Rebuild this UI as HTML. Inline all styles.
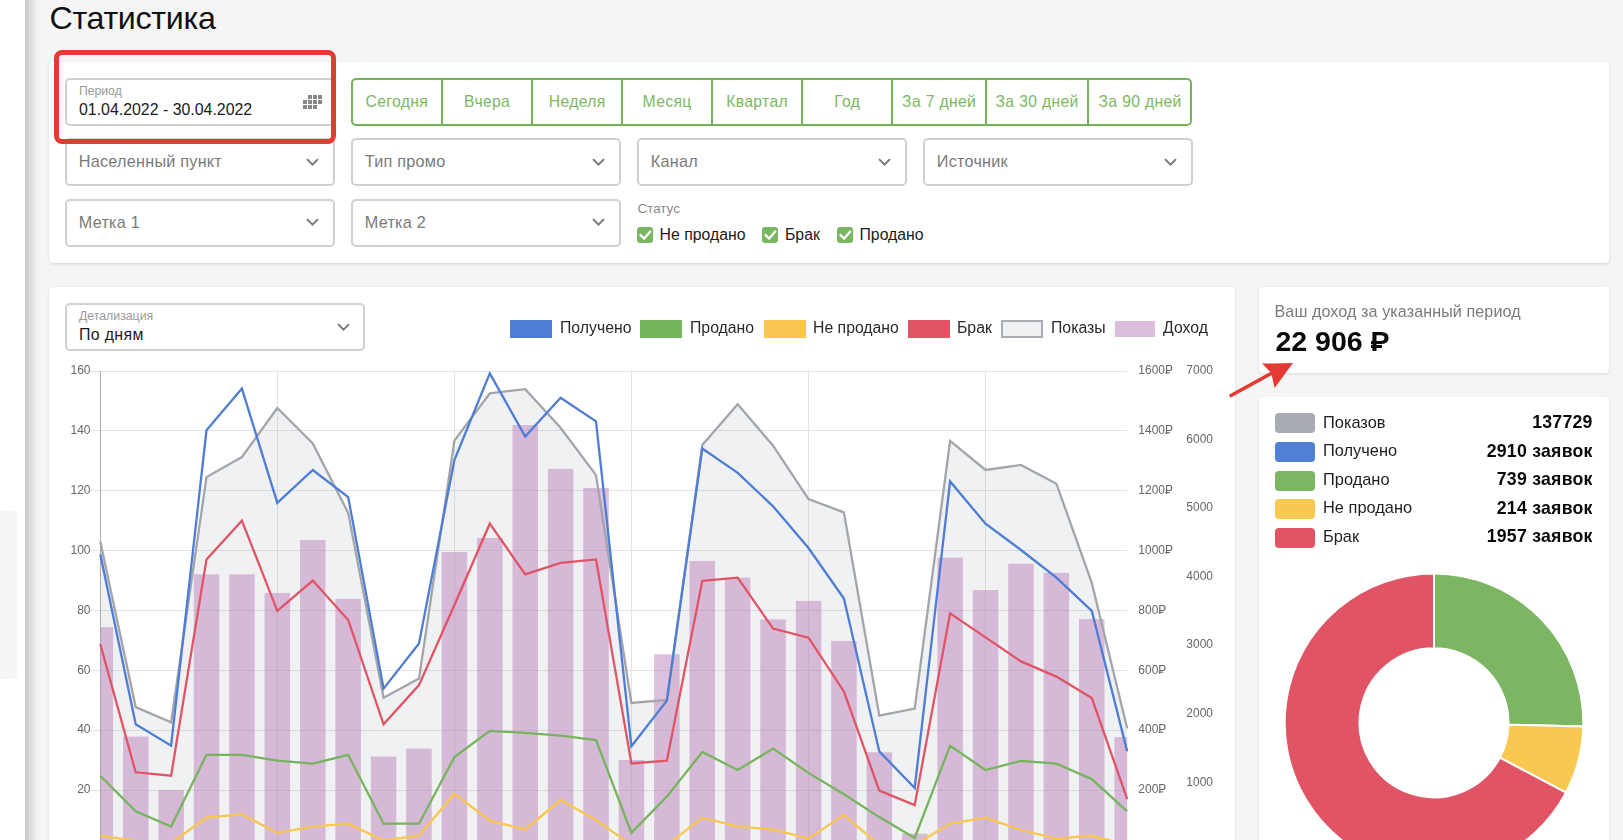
<!DOCTYPE html>
<html><head><meta charset="utf-8"><title>Статистика</title>
<style>
html,body{margin:0;padding:0}
body{width:1623px;height:840px;overflow:hidden;position:relative;background:#f5f5f5;font-family:"Liberation Sans",sans-serif}
.abs,.t,.card,.fld,.ic,.box{position:absolute}
.t{line-height:1;white-space:nowrap}
.card{background:#fff;border-radius:4px;box-shadow:0 1px 3px rgba(0,0,0,0.13)}
.fld{box-sizing:border-box;border:2px solid #d0d0d0;border-radius:5px;background:#fff}
.ax{font-family:"Liberation Sans",sans-serif;font-size:12px;fill:#666}
.rub{}
.rubb{position:relative;display:inline-block}
.rubb:after{content:"";position:absolute;left:0px;width:11px;top:0.625em;height:3px;background:#0a0a0a}
.rubb:before{content:"";position:absolute;left:0px;width:4px;top:0.5em;height:3px;background:#0a0a0a}
</style></head><body>
<div class="abs" style="left:0;top:0;width:25px;height:840px;background:#fff"></div>
<div class="abs" style="left:25px;top:0;width:16px;height:840px;background:linear-gradient(to right,rgba(0,0,0,0.2),rgba(0,0,0,0.15) 3px,rgba(0,0,0,0.08) 7px,rgba(0,0,0,0.035) 10px,rgba(0,0,0,0) 15px)"></div>
<div class="abs" style="left:0;top:511px;width:17px;height:168px;background:#f5f5f5;border-radius:0 4px 4px 0"></div>
<div class="t" style="left:49.5px;top:2.24px;font-size:32.2px;color:#111;font-weight:normal;letter-spacing:-0.3px;">Статистика</div>
<div class="card" style="left:49px;top:62px;width:1560px;height:201px"></div>
<div class="fld" style="left:65px;top:78px;width:270px;height:48px"></div>
<div class="t" style="left:79px;top:84.97px;font-size:12.2px;color:#9a9a9a;font-weight:normal;">Период</div>
<div class="t" style="left:79px;top:102.14px;font-size:15.9px;color:#1a1a1a;font-weight:normal;">01.04.2022 - 30.04.2022</div>
<svg class="ic" style="left:303px;top:95px" width="20" height="15"><rect x="5" y="0" width="4" height="4" fill="#888"/><rect x="10" y="0" width="4" height="4" fill="#888"/><rect x="15" y="0" width="4" height="4" fill="#888"/><rect x="0" y="5" width="4" height="4" fill="#888"/><rect x="5" y="5" width="4" height="4" fill="#888"/><rect x="10" y="5" width="4" height="4" fill="#888"/><rect x="15" y="5" width="4" height="4" fill="#888"/><rect x="0" y="10" width="4" height="4" fill="#888"/><rect x="5" y="10" width="4" height="4" fill="#888"/><rect x="10" y="10" width="4" height="4" fill="#888"/></svg>
<div class="abs" style="left:351px;top:78px;width:837px;height:44px;border:2px solid #74b35a;border-radius:5px"></div>
<div class="t" style="left:196.89999999999998px;width:400px;text-align:center;top:93.81px;font-size:15.7px;color:#7cb862;font-weight:normal;letter-spacing:0.35px;">Сегодня</div>
<div class="abs" style="left:441px;top:78px;width:2px;height:48px;background:#74b35a"></div>
<div class="t" style="left:287.15px;width:400px;text-align:center;top:93.81px;font-size:15.7px;color:#7cb862;font-weight:normal;letter-spacing:0.35px;">Вчера</div>
<div class="abs" style="left:531px;top:78px;width:2px;height:48px;background:#74b35a"></div>
<div class="t" style="left:377.15px;width:400px;text-align:center;top:93.81px;font-size:15.7px;color:#7cb862;font-weight:normal;letter-spacing:0.35px;">Неделя</div>
<div class="abs" style="left:621px;top:78px;width:2px;height:48px;background:#74b35a"></div>
<div class="t" style="left:467.15px;width:400px;text-align:center;top:93.81px;font-size:15.7px;color:#7cb862;font-weight:normal;letter-spacing:0.35px;">Месяц</div>
<div class="abs" style="left:711px;top:78px;width:2px;height:48px;background:#74b35a"></div>
<div class="t" style="left:557.15px;width:400px;text-align:center;top:93.81px;font-size:15.7px;color:#7cb862;font-weight:normal;letter-spacing:0.35px;">Квартал</div>
<div class="abs" style="left:801px;top:78px;width:2px;height:48px;background:#74b35a"></div>
<div class="t" style="left:647.15px;width:400px;text-align:center;top:93.81px;font-size:15.7px;color:#7cb862;font-weight:normal;letter-spacing:0.35px;">Год</div>
<div class="abs" style="left:891px;top:78px;width:2px;height:48px;background:#74b35a"></div>
<div class="t" style="left:739.15px;width:400px;text-align:center;top:93.81px;font-size:15.7px;color:#7cb862;font-weight:normal;letter-spacing:0.35px;">За 7 дней</div>
<div class="abs" style="left:985px;top:78px;width:2px;height:48px;background:#74b35a"></div>
<div class="t" style="left:837.1500000000001px;width:400px;text-align:center;top:93.81px;font-size:15.7px;color:#7cb862;font-weight:normal;letter-spacing:0.35px;">За 30 дней</div>
<div class="abs" style="left:1087px;top:78px;width:2px;height:48px;background:#74b35a"></div>
<div class="t" style="left:940.1500000000001px;width:400px;text-align:center;top:93.81px;font-size:15.7px;color:#7cb862;font-weight:normal;letter-spacing:0.35px;">За 90 дней</div>
<div class="fld" style="left:65px;top:138px;width:270px;height:48px"></div>
<div class="t" style="left:78.8px;top:153.29px;font-size:16.2px;color:#7a7a7a;font-weight:normal;letter-spacing:0.25px;">Населенный пункт</div>
<svg class="ic" style="left:306.3px;top:157.6px" width="13" height="9"><polyline points="1,1.2 6.5,6.7 12,1.2" fill="none" stroke="#767676" stroke-width="1.9"/></svg>
<div class="fld" style="left:351px;top:138px;width:270px;height:48px"></div>
<div class="t" style="left:364.8px;top:153.29px;font-size:16.2px;color:#7a7a7a;font-weight:normal;letter-spacing:0.25px;">Тип промо</div>
<svg class="ic" style="left:592.3px;top:157.6px" width="13" height="9"><polyline points="1,1.2 6.5,6.7 12,1.2" fill="none" stroke="#767676" stroke-width="1.9"/></svg>
<div class="fld" style="left:637px;top:138px;width:270px;height:48px"></div>
<div class="t" style="left:650.8px;top:153.29px;font-size:16.2px;color:#7a7a7a;font-weight:normal;letter-spacing:0.25px;">Канал</div>
<svg class="ic" style="left:878.3px;top:157.6px" width="13" height="9"><polyline points="1,1.2 6.5,6.7 12,1.2" fill="none" stroke="#767676" stroke-width="1.9"/></svg>
<div class="fld" style="left:923px;top:138px;width:270px;height:48px"></div>
<div class="t" style="left:936.8px;top:153.29px;font-size:16.2px;color:#7a7a7a;font-weight:normal;letter-spacing:0.25px;">Источник</div>
<svg class="ic" style="left:1164.3px;top:157.6px" width="13" height="9"><polyline points="1,1.2 6.5,6.7 12,1.2" fill="none" stroke="#767676" stroke-width="1.9"/></svg>
<div class="fld" style="left:65px;top:199px;width:270px;height:48px"></div>
<div class="t" style="left:78.8px;top:213.79px;font-size:16.2px;color:#7a7a7a;font-weight:normal;letter-spacing:0.25px;">Метка 1</div>
<svg class="ic" style="left:306.3px;top:218.3px" width="13" height="9"><polyline points="1,1.2 6.5,6.7 12,1.2" fill="none" stroke="#767676" stroke-width="1.9"/></svg>
<div class="fld" style="left:351px;top:199px;width:270px;height:48px"></div>
<div class="t" style="left:364.8px;top:213.79px;font-size:16.2px;color:#7a7a7a;font-weight:normal;letter-spacing:0.25px;">Метка 2</div>
<svg class="ic" style="left:592.3px;top:218.3px" width="13" height="9"><polyline points="1,1.2 6.5,6.7 12,1.2" fill="none" stroke="#767676" stroke-width="1.9"/></svg>
<div class="t" style="left:637.5px;top:201.56px;font-size:13.4px;color:#8a8a8a;font-weight:normal;">Статус</div>
<svg class="ic" style="left:637px;top:227px" width="16" height="16"><rect x="0" y="0" width="16" height="16" rx="3" fill="#79b662"/><polyline points="2.8,7.4 7.2,11.6 13.8,3.8" fill="none" stroke="#fff" stroke-width="2.3"/></svg>
<div class="t" style="left:659.6px;top:227.13px;font-size:15.8px;color:#1a1a1a;font-weight:normal;">Не продано</div>
<svg class="ic" style="left:762px;top:227px" width="16" height="16"><rect x="0" y="0" width="16" height="16" rx="3" fill="#79b662"/><polyline points="2.8,7.4 7.2,11.6 13.8,3.8" fill="none" stroke="#fff" stroke-width="2.3"/></svg>
<div class="t" style="left:785px;top:227.13px;font-size:15.8px;color:#1a1a1a;font-weight:normal;">Брак</div>
<svg class="ic" style="left:837px;top:227px" width="16" height="16"><rect x="0" y="0" width="16" height="16" rx="3" fill="#79b662"/><polyline points="2.8,7.4 7.2,11.6 13.8,3.8" fill="none" stroke="#fff" stroke-width="2.3"/></svg>
<div class="t" style="left:859.5px;top:227.13px;font-size:15.8px;color:#1a1a1a;font-weight:normal;">Продано</div>
<div class="abs" style="left:54px;top:50px;width:272px;height:84px;border:5px solid #e53a33;border-radius:8px"></div>
<div class="card" style="left:49px;top:287px;width:1186px;height:600px"></div>
<div class="fld" style="left:65px;top:303px;width:300px;height:48px"></div>
<div class="t" style="left:79px;top:309.79px;font-size:12.3px;color:#9a9a9a;font-weight:normal;">Детализация</div>
<div class="t" style="left:79px;top:327.34px;font-size:15.9px;color:#1a1a1a;font-weight:normal;letter-spacing:0.35px;">По дням</div>
<svg class="ic" style="left:336.8px;top:322.8px" width="13" height="9"><polyline points="1,1.2 6.5,6.7 12,1.2" fill="none" stroke="#767676" stroke-width="1.9"/></svg>
<div class="abs" style="left:509.5px;top:320px;width:42px;height:18px;background:#4e7dd5"></div>
<div class="t" style="left:559.5px;top:320.13px;font-size:15.8px;color:#2a2a2a;font-weight:normal;will-change:transform;">Получено</div>
<div class="abs" style="left:640px;top:320px;width:42px;height:18px;background:#76b55d"></div>
<div class="t" style="left:690px;top:320.13px;font-size:15.8px;color:#2a2a2a;font-weight:normal;will-change:transform;">Продано</div>
<div class="abs" style="left:763.7px;top:320px;width:42px;height:18px;background:#f9c74f"></div>
<div class="t" style="left:813px;top:320.13px;font-size:15.8px;color:#2a2a2a;font-weight:normal;will-change:transform;">Не продано</div>
<div class="abs" style="left:908px;top:320px;width:42px;height:18px;background:#e05466"></div>
<div class="t" style="left:957px;top:320.13px;font-size:15.8px;color:#2a2a2a;font-weight:normal;will-change:transform;">Брак</div>
<div class="abs" style="left:1001px;top:320px;width:38px;height:14px;border:2px solid #a9adb4;background:#f0f1f3"></div>
<div class="t" style="left:1051px;top:320.13px;font-size:15.8px;color:#2a2a2a;font-weight:normal;will-change:transform;">Показы</div>
<div class="abs" style="left:1115px;top:321px;width:40px;height:16px;background:#dcbfdd"></div>
<div class="t" style="left:1163px;top:320.13px;font-size:15.8px;color:#2a2a2a;font-weight:normal;will-change:transform;">Доход</div>
<svg class="abs" style="left:0;top:0" width="1623" height="840"><defs><clipPath id="plot"><rect x="100.3" y="300" width="1026.9" height="560"/></clipPath></defs><line x1="90.5" y1="371.5" x2="1127.2" y2="371.5" stroke="#e3e3e3" stroke-width="1"/>
<line x1="90.5" y1="430.5" x2="1127.2" y2="430.5" stroke="#e3e3e3" stroke-width="1"/>
<line x1="90.5" y1="490.5" x2="1127.2" y2="490.5" stroke="#e3e3e3" stroke-width="1"/>
<line x1="90.5" y1="550.5" x2="1127.2" y2="550.5" stroke="#e3e3e3" stroke-width="1"/>
<line x1="90.5" y1="610.5" x2="1127.2" y2="610.5" stroke="#e3e3e3" stroke-width="1"/>
<line x1="90.5" y1="670.5" x2="1127.2" y2="670.5" stroke="#e3e3e3" stroke-width="1"/>
<line x1="90.5" y1="730.5" x2="1127.2" y2="730.5" stroke="#e3e3e3" stroke-width="1"/>
<line x1="90.5" y1="790.5" x2="1127.2" y2="790.5" stroke="#e3e3e3" stroke-width="1"/>
<line x1="277.5" y1="371" x2="277.5" y2="860" stroke="#e3e3e3" stroke-width="1"/>
<line x1="454.5" y1="371" x2="454.5" y2="860" stroke="#e3e3e3" stroke-width="1"/>
<line x1="631.5" y1="371" x2="631.5" y2="860" stroke="#e3e3e3" stroke-width="1"/>
<line x1="808.5" y1="371" x2="808.5" y2="860" stroke="#e3e3e3" stroke-width="1"/>
<line x1="985.5" y1="371" x2="985.5" y2="860" stroke="#e3e3e3" stroke-width="1"/>
<line x1="100.5" y1="371" x2="100.5" y2="860" stroke="#acacac" stroke-width="1"/>
<g clip-path="url(#plot)">
<polygon points="100.3,850.1 100.3,541.4 135.7,707.1 171.1,722.3 206.5,477.1 241.9,457.1 277.3,408.0 312.8,443.4 348.2,512.9 383.6,697.7 419.0,678.6 454.4,440.6 489.8,393.4 525.2,389.1 560.6,427.7 596.0,475.1 631.4,702.9 666.9,700.0 702.3,445.1 737.7,404.3 773.1,445.7 808.5,499.1 843.9,512.3 879.3,715.7 914.7,708.6 950.1,440.9 985.5,470.0 1021.0,464.9 1056.4,483.7 1091.8,582.9 1127.2,728.6 1127.2,850.1" fill="rgba(169,173,180,0.17)"/>
<rect x="87.6" y="627.1" width="25.5" height="223.0" fill="rgba(186,130,188,0.5)"/>
<rect x="123.0" y="736.6" width="25.5" height="113.5" fill="rgba(186,130,188,0.5)"/>
<rect x="158.4" y="790.0" width="25.5" height="60.1" fill="rgba(186,130,188,0.5)"/>
<rect x="193.8" y="574.3" width="25.5" height="275.8" fill="rgba(186,130,188,0.5)"/>
<rect x="229.2" y="574.3" width="25.5" height="275.8" fill="rgba(186,130,188,0.5)"/>
<rect x="264.6" y="592.9" width="25.5" height="257.2" fill="rgba(186,130,188,0.5)"/>
<rect x="300.0" y="540.0" width="25.5" height="310.1" fill="rgba(186,130,188,0.5)"/>
<rect x="335.4" y="598.9" width="25.5" height="251.2" fill="rgba(186,130,188,0.5)"/>
<rect x="370.8" y="756.6" width="25.5" height="93.5" fill="rgba(186,130,188,0.5)"/>
<rect x="406.2" y="748.6" width="25.5" height="101.5" fill="rgba(186,130,188,0.5)"/>
<rect x="441.7" y="552.0" width="25.5" height="298.1" fill="rgba(186,130,188,0.5)"/>
<rect x="477.1" y="538.0" width="25.5" height="312.1" fill="rgba(186,130,188,0.5)"/>
<rect x="512.5" y="425.1" width="25.5" height="425.0" fill="rgba(186,130,188,0.5)"/>
<rect x="547.9" y="468.9" width="25.5" height="381.2" fill="rgba(186,130,188,0.5)"/>
<rect x="583.3" y="488.0" width="25.5" height="362.1" fill="rgba(186,130,188,0.5)"/>
<rect x="618.7" y="760.0" width="25.5" height="90.1" fill="rgba(186,130,188,0.5)"/>
<rect x="654.1" y="654.3" width="25.5" height="195.8" fill="rgba(186,130,188,0.5)"/>
<rect x="689.5" y="560.9" width="25.5" height="289.2" fill="rgba(186,130,188,0.5)"/>
<rect x="724.9" y="577.7" width="25.5" height="272.4" fill="rgba(186,130,188,0.5)"/>
<rect x="760.3" y="619.4" width="25.5" height="230.7" fill="rgba(186,130,188,0.5)"/>
<rect x="795.8" y="600.9" width="25.5" height="249.2" fill="rgba(186,130,188,0.5)"/>
<rect x="831.2" y="640.9" width="25.5" height="209.2" fill="rgba(186,130,188,0.5)"/>
<rect x="866.6" y="752.3" width="25.5" height="97.8" fill="rgba(186,130,188,0.5)"/>
<rect x="902.0" y="833.7" width="25.5" height="16.4" fill="rgba(186,130,188,0.5)"/>
<rect x="937.4" y="557.7" width="25.5" height="292.4" fill="rgba(186,130,188,0.5)"/>
<rect x="972.8" y="590.0" width="25.5" height="260.1" fill="rgba(186,130,188,0.5)"/>
<rect x="1008.2" y="563.7" width="25.5" height="286.4" fill="rgba(186,130,188,0.5)"/>
<rect x="1043.6" y="572.9" width="25.5" height="277.2" fill="rgba(186,130,188,0.5)"/>
<rect x="1079.0" y="619.1" width="25.5" height="231.0" fill="rgba(186,130,188,0.5)"/>
<rect x="1114.4" y="737.1" width="25.5" height="113.0" fill="rgba(186,130,188,0.5)"/>
</g>
<polyline points="100.3,541.4 135.7,707.1 171.1,722.3 206.5,477.1 241.9,457.1 277.3,408.0 312.8,443.4 348.2,512.9 383.6,697.7 419.0,678.6 454.4,440.6 489.8,393.4 525.2,389.1 560.6,427.7 596.0,475.1 631.4,702.9 666.9,700.0 702.3,445.1 737.7,404.3 773.1,445.7 808.5,499.1 843.9,512.3 879.3,715.7 914.7,708.6 950.1,440.9 985.5,470.0 1021.0,464.9 1056.4,483.7 1091.8,582.9 1127.2,728.6" fill="none" stroke="#a2a5aa" stroke-width="2.3" stroke-linejoin="miter"/>
<polyline points="100.3,835.7 135.7,841.0 171.1,843.0 206.5,817.7 241.9,814.3 277.3,832.9 312.8,826.6 348.2,823.7 383.6,840.5 419.0,835.7 454.4,793.7 489.8,820.6 525.2,829.4 560.6,800.0 596.0,820.0 631.4,845.0 666.9,845.0 702.3,817.7 737.7,826.6 773.1,829.4 808.5,838.6 843.9,814.9 879.3,845.0 914.7,845.0 950.1,823.7 985.5,817.7 1021.0,830.0 1056.4,838.6 1091.8,835.7 1127.2,845.0" fill="none" stroke="#f9c74f" stroke-width="2.3" stroke-linejoin="miter"/>
<polyline points="100.3,775.7 135.7,811.4 171.1,826.6 206.5,754.9 241.9,754.9 277.3,760.6 312.8,763.7 348.2,754.9 383.6,823.7 419.0,823.7 454.4,757.1 489.8,730.9 525.2,732.9 560.6,735.7 596.0,740.0 631.4,832.9 666.9,796.6 702.3,752.0 737.7,770.0 773.1,748.6 808.5,772.9 843.9,794.3 879.3,817.1 914.7,838.0 950.1,745.7 985.5,770.0 1021.0,760.9 1056.4,763.7 1091.8,779.1 1127.2,811.4" fill="none" stroke="#76b55d" stroke-width="2.3" stroke-linejoin="miter"/>
<polyline points="100.3,644.3 135.7,772.3 171.1,775.7 206.5,559.4 241.9,520.6 277.3,610.9 312.8,580.6 348.2,620.0 383.6,724.3 419.0,685.1 454.4,605.0 489.8,523.7 525.2,574.3 560.6,562.9 596.0,559.4 631.4,763.4 666.9,760.6 702.3,580.9 737.7,577.7 773.1,628.6 808.5,637.7 843.9,691.4 879.3,790.6 914.7,805.1 950.1,613.4 985.5,637.4 1021.0,661.4 1056.4,676.6 1091.8,698.0 1127.2,799.1" fill="none" stroke="#e05466" stroke-width="2.3" stroke-linejoin="miter"/>
<polyline points="100.3,554.3 135.7,724.3 171.1,745.7 206.5,430.3 241.9,388.6 277.3,502.9 312.8,470.0 348.2,497.1 383.6,688.6 419.0,643.4 454.4,460.0 489.8,373.4 525.2,436.6 560.6,397.7 596.0,421.4 631.4,746.3 666.9,700.6 702.3,448.6 737.7,472.9 773.1,506.3 808.5,548.0 843.9,598.6 879.3,751.4 914.7,788.0 950.1,481.4 985.5,523.7 1021.0,550.0 1056.4,577.7 1091.8,610.9 1127.2,751.4" fill="none" stroke="#4e7dd5" stroke-width="2.3" stroke-linejoin="miter"/>
<g style="will-change:transform">
<text x="90.5" y="374.2" text-anchor="end" class="ax">160</text>
<text x="1138.3" y="374.2" class="ax">1600P</text>
<line x1="1165.3" y1="372.9" x2="1170.1" y2="372.9" stroke="#666" stroke-width="1"/>
<text x="90.5" y="434.1" text-anchor="end" class="ax">140</text>
<text x="1138.3" y="434.1" class="ax">1400P</text>
<line x1="1165.3" y1="432.8" x2="1170.1" y2="432.8" stroke="#666" stroke-width="1"/>
<text x="90.5" y="493.9" text-anchor="end" class="ax">120</text>
<text x="1138.3" y="493.9" class="ax">1200P</text>
<line x1="1165.3" y1="492.6" x2="1170.1" y2="492.6" stroke="#666" stroke-width="1"/>
<text x="90.5" y="553.8" text-anchor="end" class="ax">100</text>
<text x="1138.3" y="553.8" class="ax">1000P</text>
<line x1="1165.3" y1="552.5" x2="1170.1" y2="552.5" stroke="#666" stroke-width="1"/>
<text x="90.5" y="613.6" text-anchor="end" class="ax">80</text>
<text x="1138.3" y="613.6" class="ax">800P</text>
<line x1="1158.6" y1="612.3" x2="1163.4" y2="612.3" stroke="#666" stroke-width="1"/>
<text x="90.5" y="673.5" text-anchor="end" class="ax">60</text>
<text x="1138.3" y="673.5" class="ax">600P</text>
<line x1="1158.6" y1="672.2" x2="1163.4" y2="672.2" stroke="#666" stroke-width="1"/>
<text x="90.5" y="733.4" text-anchor="end" class="ax">40</text>
<text x="1138.3" y="733.4" class="ax">400P</text>
<line x1="1158.6" y1="732.1" x2="1163.4" y2="732.1" stroke="#666" stroke-width="1"/>
<text x="90.5" y="793.2" text-anchor="end" class="ax">20</text>
<text x="1138.3" y="793.2" class="ax">200P</text>
<line x1="1158.6" y1="791.9" x2="1163.4" y2="791.9" stroke="#666" stroke-width="1"/>
<text x="1213" y="374.2" text-anchor="end" class="ax">7000</text>
<text x="1213" y="442.8" text-anchor="end" class="ax">6000</text>
<text x="1213" y="511.3" text-anchor="end" class="ax">5000</text>
<text x="1213" y="579.8" text-anchor="end" class="ax">4000</text>
<text x="1213" y="648.4" text-anchor="end" class="ax">3000</text>
<text x="1213" y="717.0" text-anchor="end" class="ax">2000</text>
<text x="1213" y="785.5" text-anchor="end" class="ax">1000</text>
</g></svg>
<div class="card" style="left:1259px;top:287px;width:350px;height:86px"></div>
<div class="t" style="left:1274.5px;top:303.37px;font-size:16.1px;color:#7a7a7a;font-weight:normal;letter-spacing:0.1px;">Ваш доход за указанный период</div>
<div class="t" style="left:1275.5px;top:326.87px;font-size:28.5px;color:#0a0a0a;font-weight:bold;">22 906 <span class="rubb">P</span></div>
<svg class="abs" style="left:0;top:0" width="1623" height="840"><line x1="1231" y1="395.5" x2="1272" y2="373" stroke="#e53a33" stroke-width="3.6" stroke-linecap="round"/><polygon points="1262,363.6 1293,363 1274.6,388 1271.2,372.8" fill="#e53a33"/></svg>
<div class="card" style="left:1259px;top:397px;width:350px;height:500px"></div>
<div class="abs" style="left:1275px;top:413.0px;width:40px;height:20px;border-radius:4px;background:#a8abb2"></div>
<div class="t" style="left:1323px;top:413.52px;font-size:16.4px;color:#1f1f1f;font-weight:normal;">Показов</div>
<div class="t" style="right:30.299999999999955px;top:413.92px;font-size:17.7px;color:#0a0a0a;font-weight:bold;letter-spacing:0.25px;">137729</div>
<div class="abs" style="left:1275px;top:441.8px;width:40px;height:20px;border-radius:4px;background:#507fd7"></div>
<div class="t" style="left:1323px;top:442.12px;font-size:16.4px;color:#1f1f1f;font-weight:normal;">Получено</div>
<div class="t" style="right:30.299999999999955px;top:442.52px;font-size:17.7px;color:#0a0a0a;font-weight:bold;letter-spacing:0.25px;">2910 заявок</div>
<div class="abs" style="left:1275px;top:470.6px;width:40px;height:20px;border-radius:4px;background:#7cb662"></div>
<div class="t" style="left:1323px;top:470.72px;font-size:16.4px;color:#1f1f1f;font-weight:normal;">Продано</div>
<div class="t" style="right:30.299999999999955px;top:471.12px;font-size:17.7px;color:#0a0a0a;font-weight:bold;letter-spacing:0.25px;">739 заявок</div>
<div class="abs" style="left:1275px;top:499.4px;width:40px;height:20px;border-radius:4px;background:#f9c851"></div>
<div class="t" style="left:1323px;top:499.32px;font-size:16.4px;color:#1f1f1f;font-weight:normal;">Не продано</div>
<div class="t" style="right:30.299999999999955px;top:499.72px;font-size:17.7px;color:#0a0a0a;font-weight:bold;letter-spacing:0.25px;">214 заявок</div>
<div class="abs" style="left:1275px;top:528.2px;width:40px;height:20px;border-radius:4px;background:#e05465"></div>
<div class="t" style="left:1323px;top:527.92px;font-size:16.4px;color:#1f1f1f;font-weight:normal;">Брак</div>
<div class="t" style="right:30.299999999999955px;top:528.32px;font-size:17.7px;color:#0a0a0a;font-weight:bold;letter-spacing:0.25px;">1957 заявок</div>
<svg class="abs" style="left:0;top:0" width="1623" height="840"><path d="M1434.00,573.50 A149.3,149.3 0 0 1 1583.25,726.51 L1508.48,724.65 A74.5,74.5 0 0 0 1434.00,648.30 Z" fill="#7cb662" stroke="#fff" stroke-width="2" stroke-linejoin="round"/>
<path d="M1583.25,726.51 A149.3,149.3 0 0 1 1565.95,792.65 L1499.84,757.66 A74.5,74.5 0 0 0 1508.48,724.65 Z" fill="#f9c851" stroke="#fff" stroke-width="2" stroke-linejoin="round"/>
<path d="M1565.95,792.65 A149.3,149.3 0 1 1 1434.00,573.50 L1434.00,648.30 A74.5,74.5 0 1 0 1499.84,757.66 Z" fill="#e05465" stroke="#fff" stroke-width="2" stroke-linejoin="round"/></svg>
</body></html>
